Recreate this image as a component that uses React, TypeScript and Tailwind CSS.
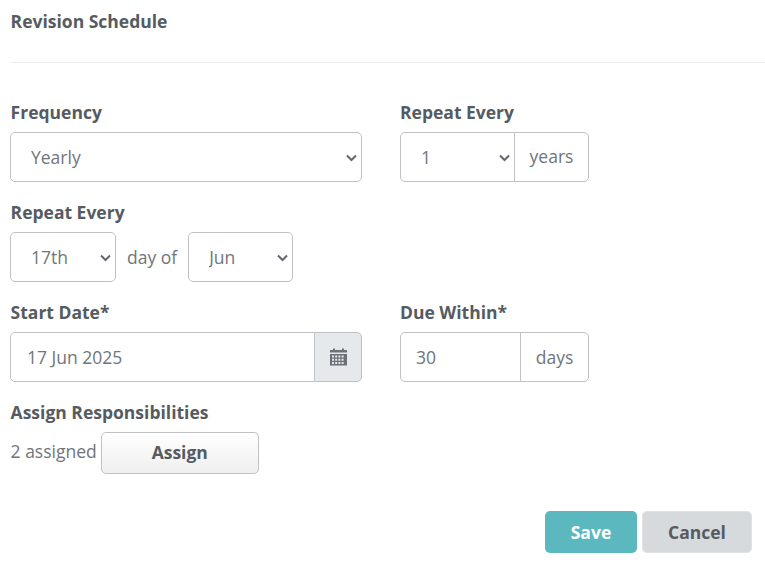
import React from "react";

const label = "block h-[32px] text-[17.5px] leading-[24px] font-bold text-[#555b61]";
const leftLabel = `${label} pl-[0.6px]`;
const field = "h-[50px] border border-[#bfc1c5] bg-white text-[17.5px] text-[#70757b]";
const selectBase = `${field} w-full appearance-none pl-[20px] pr-[20px]`;

function Calendar() {
  return (
    <svg width="17" height="18" viewBox="0 0 17 18" fill="#6c7178" aria-hidden="true">
      <rect x="3" y="0.5" width="2" height="3" />
      <rect x="12" y="0.5" width="2" height="3" />
      <rect x="0" y="2" width="17" height="2.5" />
      <path fillRule="evenodd" d="M0 6h17v11.5H0zM2 7.5v2h2v-2zm3.2 0v2h2v-2zm3.2 0v2h2v-2zm3.2 0v2h2v-2zM2 10.7v2h2v-2zm3.2 0v2h2v-2zm3.2 0v2h2v-2zm3.2 0v2h2v-2zM2 13.9v2h2v-2zm3.2 0v2h2v-2zm3.2 0v2h2v-2zm3.2 0v2h2v-2z" />
    </svg>
  );
}

function Chevron() {
  return (
    <svg
      className="absolute right-[5px] top-[22px] pointer-events-none"
      width="11"
      height="8"
      viewBox="0 0 11 8"
      fill="none"
      stroke="#63676e"
      strokeWidth="2"
      aria-hidden="true"
    >
      <path d="M1 1.5l4.5 4.5 4.5-4.5" />
    </svg>
  );
}

export default function App() {
  return (
    <div className="w-[765px] h-[566px] bg-white pl-[10px] font-['Open_Sans',sans-serif] overflow-hidden">
      <div className="h-[63px] pt-[9px] border-b border-[#e9ebec]">
        <h2 className="pl-[0.6px] text-[17.5px] leading-[24px] font-bold text-[#555b61]">Revision Schedule</h2>
      </div>

      <div className="mt-[37px] flex">
        <div className="w-[352px]">
          <label className={leftLabel}>Frequency</label>
          <div className="relative">
            <select className={`${selectBase} rounded-[5px]`} defaultValue="Yearly">
              <option>Yearly</option>
            </select>
            <Chevron />
          </div>
        </div>
        <div className="ml-[38px]">
          <label className={label}>Repeat Every</label>
          <div className="flex">
            <div className="relative w-[115px]">
              <select className={`${selectBase} rounded-l-[5px]`} defaultValue="1">
                <option>1</option>
              </select>
              <Chevron />
            </div>
            <span className={`${field} -ml-px w-[75px] pb-[2px] rounded-r-[5px] flex items-center justify-center`}>years</span>
          </div>
        </div>
      </div>

      <div className="mt-[18px]">
        <label className={leftLabel}>Repeat Every</label>
        <div className="flex items-center">
          <div className="relative w-[106px]">
            <select className={`${selectBase} rounded-[5px]`} defaultValue="17th">
              <option>17th</option>
            </select>
            <Chevron />
          </div>
          <span className="mx-[11px] text-[17.5px] text-[#70757b]">day of</span>
          <div className="relative w-[105px]">
            <select className={`${selectBase} rounded-[5px]`} defaultValue="Jun">
              <option>Jun</option>
            </select>
            <Chevron />
          </div>
        </div>
      </div>

      <div className="mt-[18px] flex">
        <div className="w-[352px]">
          <label className={leftLabel}>Start Date*</label>
          <div className="flex">
            <span className={`${field} flex-1 rounded-l-[5px] pl-4 flex items-center`}>17 Jun 2025</span>
            <span className="h-[50px] w-[48px] -ml-px border border-[#bfc1c5] bg-[#e6e9eb] rounded-r-[5px] flex items-center justify-center">
              <Calendar />
            </span>
          </div>
        </div>
        <div className="ml-[38px]">
          <label className={label}>Due Within*</label>
          <div className="flex">
            <span className={`${field} w-[121px] rounded-l-[5px] pl-[15px] flex items-center`}>30</span>
            <span className={`${field} -ml-px w-[69px] rounded-r-[5px] flex items-center justify-center`}>days</span>
          </div>
        </div>
      </div>

      <div className="mt-[18px]">
        <label className={leftLabel}>Assign Responsibilities</label>
        <div className="flex items-center">
          <span className="pl-[0.6px] pb-[3px] text-[17.5px] text-[#70757b]">2 assigned</span>
          <button className="ml-[4px] h-[42px] w-[158px] pb-[2px] rounded-[5px] border border-[#bfc1c5] bg-gradient-to-b from-white to-[#efefef] text-[17.5px] font-bold text-[#555b61]">
            Assign
          </button>
        </div>
      </div>

      <div className="mt-[37px] flex justify-end gap-[5px] pr-[13px]">
        <button className="h-[42px] w-[92px] rounded-[5px] bg-[#5cb8bf] text-[17.5px] font-bold text-white">Save</button>
        <button className="h-[42px] w-[110px] rounded-[5px] border border-[#dfe2e4] bg-[#d6dadc] text-[17.5px] font-bold text-[#555b61]">Cancel</button>
      </div>
    </div>
  );
}
